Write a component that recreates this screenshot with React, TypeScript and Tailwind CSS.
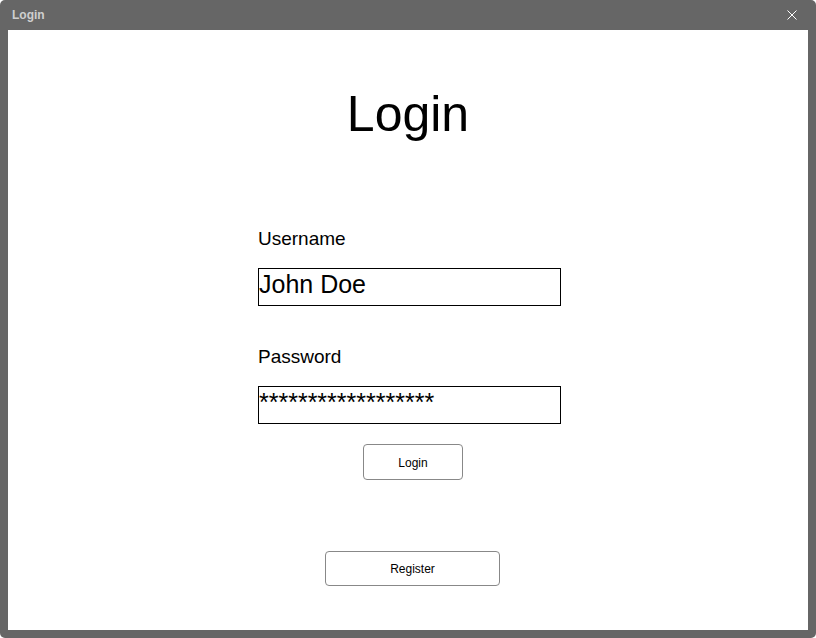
import React from "react";

export default function App() {
  const font = { fontFamily: '"Liberation Sans", Arial, Helvetica, sans-serif' };
  return (
    <div
      className="w-[816px] h-[638px] bg-[#666666] rounded-[5px] px-[8px] pb-[8px] flex flex-col"
      style={font}
    >
      <div className="h-[30px] flex items-center justify-between pl-[4px] pr-[11px]">
        <span className="text-[12px] font-bold text-[#cfcfcf] leading-none">Login</span>
        <svg width="10" height="10" viewBox="0 0 10 10" className="block">
          <path d="M0.5 0.5 L9.5 9.5 M9.5 0.5 L0.5 9.5" stroke="#ffffff" strokeWidth="1" fill="none" />
        </svg>
      </div>
      <div className="bg-white h-[600px] flex flex-col">
        <div className="mt-[59px] text-center text-[50px] leading-none text-black">Login</div>
        <div className="mt-[90px] ml-[250px] w-[303px] flex flex-col">
          <div className="text-[19px] leading-none text-black">Username</div>
          <div className="mt-[20px] h-[38px] border border-black px-0 text-[25px] leading-[30px] text-black">
            John Doe
          </div>
          <div className="mt-[41px] text-[19px] leading-none text-black">Password</div>
          <div className="mt-[20px] h-[38px] border border-black px-0 text-[25px] leading-[30px] text-black">
            ******************
          </div>
        </div>
        <div className="mt-[20px] ml-[355px] w-[100px] h-[36px] pt-[1px] border border-[#888888] rounded-[4px] flex items-center justify-center text-[12px] text-black">
          Login
        </div>
        <div className="mt-[71px] ml-[317px] w-[175px] h-[35px] pt-[1px] border border-[#888888] rounded-[4px] flex items-center justify-center text-[12px] text-black">
          Register
        </div>
      </div>
    </div>
  );
}
